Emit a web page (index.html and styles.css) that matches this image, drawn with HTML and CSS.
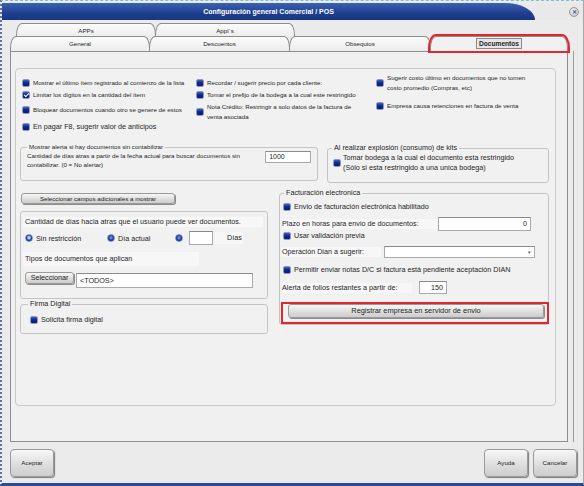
FILE: index.html
```html
<!DOCTYPE html>
<html lang="es">
<head>
    <meta charset="UTF-8">
    <title>Configuración general Comercial / POS</title>
    <link rel="stylesheet" href="styles.css">
</head>
<body>
<div class="window">
    <div class="titlebar">
        <div class="title">Configuración general Comercial / POS</div>
        <div class="title-end"><span class="close">✕</span></div>
    </div>

    <!-- pestañas -->
    <div class="tab-row back">
        <div class="tab t-apps">APPs</div>
        <div class="tab t-appis">Appi´s</div>
    </div>
    <div class="tab-row front">
        <div class="tab t-general">General</div>
        <div class="tab t-desc">Descuentos</div>
        <div class="tab t-obs">Obsequios</div>
        <div class="tab t-doc active"><span class="focus">Documentos</span></div>
    </div>

    <div class="page">
        <div class="panel">
            <div class="inner">

                <div class="options">
                    <div class="opt-col c1">
                        <div class="opt"><span class="cb"></span>Mostrar el último ítem registrado al comienzo de la lista</div>
                        <div class="opt mt2"><span class="cb checked"></span>Limitar los dígitos en la cantidad del ítem</div>
                        <div class="opt mt5"><span class="cb"></span>Bloquear documentos cuando otro se genere de estos</div>
                        <div class="opt big mt6"><span class="cb"></span>En pagar F8, sugerir valor de anticipos</div>
                    </div>
                    <div class="opt-col c2">
                        <div class="opt"><span class="cb"></span>Recordar / sugerir precio por cada cliente:</div>
                        <div class="opt mt2"><span class="cb"></span>Tomar el prefijo de la bodega a la cual este restringido</div>
                        <div class="opt mt2"><span class="cb"></span><span>Nota Crédito: Restringir a solo datos de la factura de<br>venta asociada</span></div>
                    </div>
                    <div class="opt-col c3">
                        <div class="opt"><span class="cb"></span><span>Sugerir costo último en documentos que no tomen<br>costo promedio (Compras, etc)</span></div>
                        <div class="opt mt8"><span class="cb"></span>Empresa causa retenciones en factura de venta</div>
                    </div>
                </div>

                <div class="pair">
                    <fieldset class="group alert">
                        <legend>Mostrar alerta si hay documentos sin contabilizar</legend>
                        <div class="alert-row">
                            <span class="alert-text">Cantidad de días atras a partir de la fecha actual para buscar documentos sin<br>contabilizar. (0 = No alertar)</span>
                            <span class="field w-1000">1000</span>
                        </div>
                    </fieldset>
                    <fieldset class="group kits big">
                        <legend>Al realizar explosión (consumo) de kits</legend>
                        <div class="opt"><span class="cb"></span><span>Tomar bodega a la cual el documento esta restringido<br>(Sólo si esta restringido a una unica bodega)</span></div>
                    </fieldset>
                </div>

                <div class="lower">
                    <div class="left-col">
                        <div class="btn btn-campos">Seleccionar campos adicionales a mostrar</div>

                        <div class="box days big">
                            <div class="lbl lbl-days">Cantidad de días hacia atras que el usuario puede ver documentos.</div>
                            <div class="radios">
                                <span class="radio-item ri1"><span class="radio on"></span>Sin restricción</span>
                                <span class="radio-item ri2"><span class="radio"></span>Día actual</span>
                                <span class="radio"></span>
                                <span class="field w-dias"></span>
                                <span class="lbl lbl-dias">Días</span>
                            </div>
                            <div class="lbl lbl-tipos">Tipos de documentos que aplican</div>
                            <div class="sel-row">
                                <span class="btn btn-sel">Seleccionar</span>
                                <span class="field w-todos">&lt;TODOS&gt;</span>
                            </div>
                        </div>

                        <fieldset class="group firma big">
                            <legend>Firma Digital</legend>
                            <div class="opt"><span class="cb"></span>Solicita firma digital</div>
                        </fieldset>
                    </div>

                    <fieldset class="group fact big">
                        <legend>Facturación electronica</legend>
                        <div class="opt f1"><span class="cb"></span>Envio de facturación electrónica habilitado</div>
                        <div class="frow f2">
                            <span class="lbl lbl-plazo">Plazo en horas para envio de documentos:</span>
                            <span class="field num w-plazo">0</span>
                        </div>
                        <div class="opt"><span class="cb"></span>Usar validación previa</div>
                        <div class="frow f4">
                            <span class="lbl lbl-oper">Operación Dian a sugerir:</span>
                            <span class="field w-oper"><span class="arrow">▾</span></span>
                        </div>
                        <div class="opt f5"><span class="cb"></span>Permitir enviar notas D/C si factura está pendiente aceptación DIAN</div>
                        <div class="frow f6">
                            <span class="lbl lbl-folios">Alerta de folios restantes a partir de:</span>
                            <span class="field num w-folios">150</span>
                        </div>
                        <div class="mark">
                            <div class="btn btn-registrar">Registrar empresa en servidor de envio</div>
                        </div>
                    </fieldset>
                </div>

            </div>
        </div>
    </div>

    <div class="footer">
        <div class="btn big-btn">Aceptar</div>
        <div class="btn big-btn push">Ayuda</div>
        <div class="btn big-btn">Cancelar</div>
    </div>
</div>
</body>
</html>
```

FILE: styles.css
```css
* {
    box-sizing: border-box;
}
body {
    margin: 0;
    font-family: "Liberation Sans", Arial, sans-serif;
    font-size: 6.2px;
    color: #1e1e1e;
    background-color: #ffffff;
}
.window {
    width: 584px;
    height: 486px;
    padding-top: 2px;
    background-color: #ebebeb;
    border-top: 1px dashed #7fbfca;
    border-left: 2px dotted #5d71a8;
    border-right: 1px solid #a8a8a8;
    border-bottom: 3px solid #2a4a97;
}

/* barra de titulo */
.titlebar {
    display: flex;
    height: 17px;
}
.title {
    width: 533px;
    background: linear-gradient(#3b62b4, #1f3f8e 60%, #173584);
    border-top-right-radius: 30px 17px;
    color: #ffffff;
    font-weight: bold;
    font-size: 7px;
    line-height: 17px;
    text-align: center;
}
.title-end {
    flex: 1;
    display: flex;
    justify-content: flex-end;
    align-items: center;
    padding-right: 4px;
    background-color: #e9e9e9;
}
.close {
    width: 10px;
    height: 10px;
    border-radius: 50%;
    background: radial-gradient(circle at 40% 35%, #f4f4f4, #b9b9b9);
    border: 1px solid #9a9a9a;
    color: #3a5cb0;
    font-size: 6px;
    font-weight: bold;
    line-height: 8px;
    text-align: center;
}

/* pestañas */
.tab-row {
    display: flex;
}
.tab-row.back {
    margin-top: 3px;
    padding-left: 14px;
}
.tab-row.front {
    margin-top: -1px;
    padding-left: 8px;
}
.tab {
    height: 14px;
    margin-right: -1px;
    border: 1px solid #8c8c8c;
    border-bottom: none;
    border-radius: 6px 6px 0 0 / 12px 12px 0 0;
    background: linear-gradient(#fbfbfb, #ececec);
    text-align: center;
    line-height: 13px;
}
.tab-row.front .tab {
    height: 15px;
    line-height: 14px;
}
.t-apps { width: 140px; }
.t-appis { width: 140px; }
.t-general { width: 140px; }
.t-desc { width: 141px; }
.t-obs { width: 142px; }
.t-doc { width: 138px; }
.tab.active {
    background: #f1f1f1;
    font-weight: bold;
    font-size: 6.6px;
    outline: 2px solid #e2262d;
    outline-offset: 0;
}
.focus {
    display: inline-block;
    padding: 0 2px;
    line-height: 9px;
    border: 1px solid #8a8a8a;
    background-color: #e6e6e6;
}

/* panel de la pestaña */
.page {
    width: 564px;
    margin-left: 8px;
    padding-right: 5px;
    border-right: 1px solid #9d9d9d;
}
.panel {
    height: 391px;
    border: 1px solid #8e8e8e;
    background-color: #f0f0f0;
    padding: 16px 0 0 4px;
}
.inner {
    width: 541px;
    height: 338px;
    border: 1px solid #c9c9c9;
    border-radius: 4px;
    background-color: #f1f1f1;
}

/* opciones superiores */
.options {
    display: flex;
    align-items: flex-start;
    margin-top: 9px;
    padding-left: 6px;
}
.opt-col {
    display: flex;
    flex-direction: column;
}
.c1 { width: 174px; }
.c2 { width: 180px; }
.c3 { width: 170px; margin-top: -5px; }
.opt {
    display: flex;
    align-items: center;
    gap: 2px;
    min-height: 10px;
    line-height: 10px;
    white-space: nowrap;
}
.big {
    font-size: 7.2px;
}
.opt.big {
    min-height: 12px;
}
.mt2 { margin-top: 2px; }
.mt5 { margin-top: 5px; }
.mt6 { margin-top: 6px; }
.mt8 { margin-top: 8px; }

.cb {
    flex: none;
    display: flex;
    justify-content: center;
    align-items: center;
    width: 8px;
    height: 8px;
    margin-right: 1px;
    border: 1px solid #8b97c4;
    border-radius: 2px;
    background: linear-gradient(#3d61c8, #112a88 45%, #0a1d6e);
}
.cb.checked::after {
    content: "";
    width: 2px;
    height: 4px;
    margin-top: -1px;
    border: solid #ffffff;
    border-width: 0 1.3px 1.3px 0;
    transform: rotate(45deg);
}
.radio {
    flex: none;
    width: 8px;
    height: 8px;
    border-radius: 50%;
    border: 1px solid #7f8fc0;
    background: radial-gradient(circle at 50% 45%, #5f84e0 0 22%, #112b88 60%);
}
.radio.on {
    background: radial-gradient(circle at 50% 45%, #b9c9f7 0 25%, #112b88 60%);
}

/* grupos */
fieldset.group {
    margin: 0;
    border: 1px solid #c4c4c4;
    border-radius: 3px;
    min-width: 0;
}
fieldset.group legend {
    padding: 0 2px;
    line-height: 8px;
}
fieldset.group.big legend {
    line-height: 10px;
}
.pair {
    display: flex;
    align-items: flex-start;
    gap: 9px;
    margin: 10px 0 0 4px;
}
.alert {
    width: 298px;
    height: 38px;
    padding: 0 6px;
}
.alert-row {
    display: flex;
    align-items: flex-start;
}
.alert-text {
    width: 239px;
    line-height: 9px;
    white-space: nowrap;
}
.kits {
    width: 222px;
    height: 40px;
    margin-top: -1px;
    padding: 0 4px;
}
.kits .opt {
    margin-left: 1px;
    line-height: 10px;
    gap: 1px;
}

.field {
    display: inline-block;
    border: 1px solid #a9a9a9;
    border-top-color: #8a8a8a;
    background-color: #ffffff;
    padding: 0 3px;
    white-space: nowrap;
}
.w-1000 {
    width: 46px;
    height: 12px;
    line-height: 10px;
    font-size: 7px;
}
.num {
    text-align: right;
}

/* parte inferior */
.lower {
    display: flex;
    align-items: flex-start;
    gap: 11px;
    margin: 5px 0 0 4px;
}
.left-col {
    width: 248px;
    padding-top: 5px;
}
.btn {
    border: 1px solid #9a9a9a;
    border-radius: 3px;
    background: linear-gradient(#f7f7f7, #dcdcdc 60%, #cdcdcd);
    box-shadow: 1px 1px 0 #8c8c8c;
    text-align: center;
    white-space: nowrap;
}
.btn-campos {
    width: 154px;
    height: 11px;
    margin-left: 1px;
    line-height: 9px;
}
.box {
    border: 1px solid #c4c4c4;
    border-radius: 3px;
}
.days {
    height: 88px;
    margin-top: 7px;
    padding-left: 2px;
}
.lbl {
    display: inline-block;
    background-color: #f7f7f7;
    white-space: nowrap;
}
.lbl-days {
    display: block;
    width: 240px;
    height: 10px;
    margin-top: 5px;
    padding-left: 2px;
    line-height: 10px;
}
.radios {
    display: flex;
    align-items: center;
    height: 14px;
    margin-top: 4px;
    padding-left: 2px;
}
.radio-item {
    display: flex;
    align-items: center;
    gap: 3px;
}
.ri1 { width: 82px; }
.ri2 { width: 68px; }
.w-dias {
    width: 24px;
    height: 14px;
    margin-left: 6px;
}
.lbl-dias {
    width: 28px;
    height: 12px;
    margin-left: 2px;
    padding-left: 12px;
    line-height: 12px;
}
.lbl-tipos {
    display: block;
    width: 176px;
    height: 14px;
    margin-top: 7px;
    padding-left: 2px;
    line-height: 14px;
}
.sel-row {
    display: flex;
    align-items: flex-start;
    gap: 2px;
    margin-top: 6px;
    padding-left: 2px;
}
.btn-sel {
    width: 49px;
    height: 12px;
    line-height: 10px;
}
.w-todos {
    width: 177px;
    height: 15px;
    margin-top: 1px;
    line-height: 13px;
}
.firma {
    width: 248px;
    height: 35px;
    margin-top: 14px;
    padding: 0 7px;
}
.firma .opt {
    margin-top: 6px;
    margin-left: 2px;
}

.fact {
    width: 270px;
    height: 137px;
    padding: 0 0 0 2px;
}
.fact legend {
    margin-left: 2px;
}
.fact .opt {
    margin-left: 1px;
}
.f1 { margin-top: 4px; }
.frow {
    display: flex;
    align-items: center;
}
.f2 {
    margin-top: 5px;
    height: 14px;
}
.lbl-plazo {
    width: 155px;
    line-height: 10px;
}
.w-plazo {
    width: 93px;
    height: 14px;
    margin-left: 1px;
    line-height: 12px;
}
.f4 {
    margin-top: 5px;
    height: 12px;
}
.lbl-oper {
    width: 99px;
    line-height: 10px;
}
.w-oper {
    width: 151px;
    height: 12px;
    margin-left: 3px;
    text-align: right;
    line-height: 10px;
}
.arrow {
    font-size: 5px;
    color: #555;
}
.f5 { margin-top: 7px; }
.f6 {
    margin-top: 6px;
    height: 13px;
}
.lbl-folios {
    width: 130px;
    line-height: 10px;
}
.w-folios {
    width: 28px;
    height: 13px;
    margin-left: 7px;
    line-height: 11px;
}
.mark {
    height: 22px;
    margin: 8px -1px 0 -1px;
    border: 2px solid #e2262d;
}
.btn-registrar {
    height: 14px;
    margin: 0 3px 0 5px;
    line-height: 12px;
    font-size: 7.4px;
}

/* botones inferiores */
.footer {
    display: flex;
    gap: 5px;
    margin-top: 7px;
    padding: 0 6px 0 8px;
}
.big-btn {
    width: 44px;
    height: 28px;
    border-radius: 4px;
    line-height: 26px;
    box-shadow: 1px 1px 1px #7c7c7c;
}
.push {
    margin-left: auto;
}
```
